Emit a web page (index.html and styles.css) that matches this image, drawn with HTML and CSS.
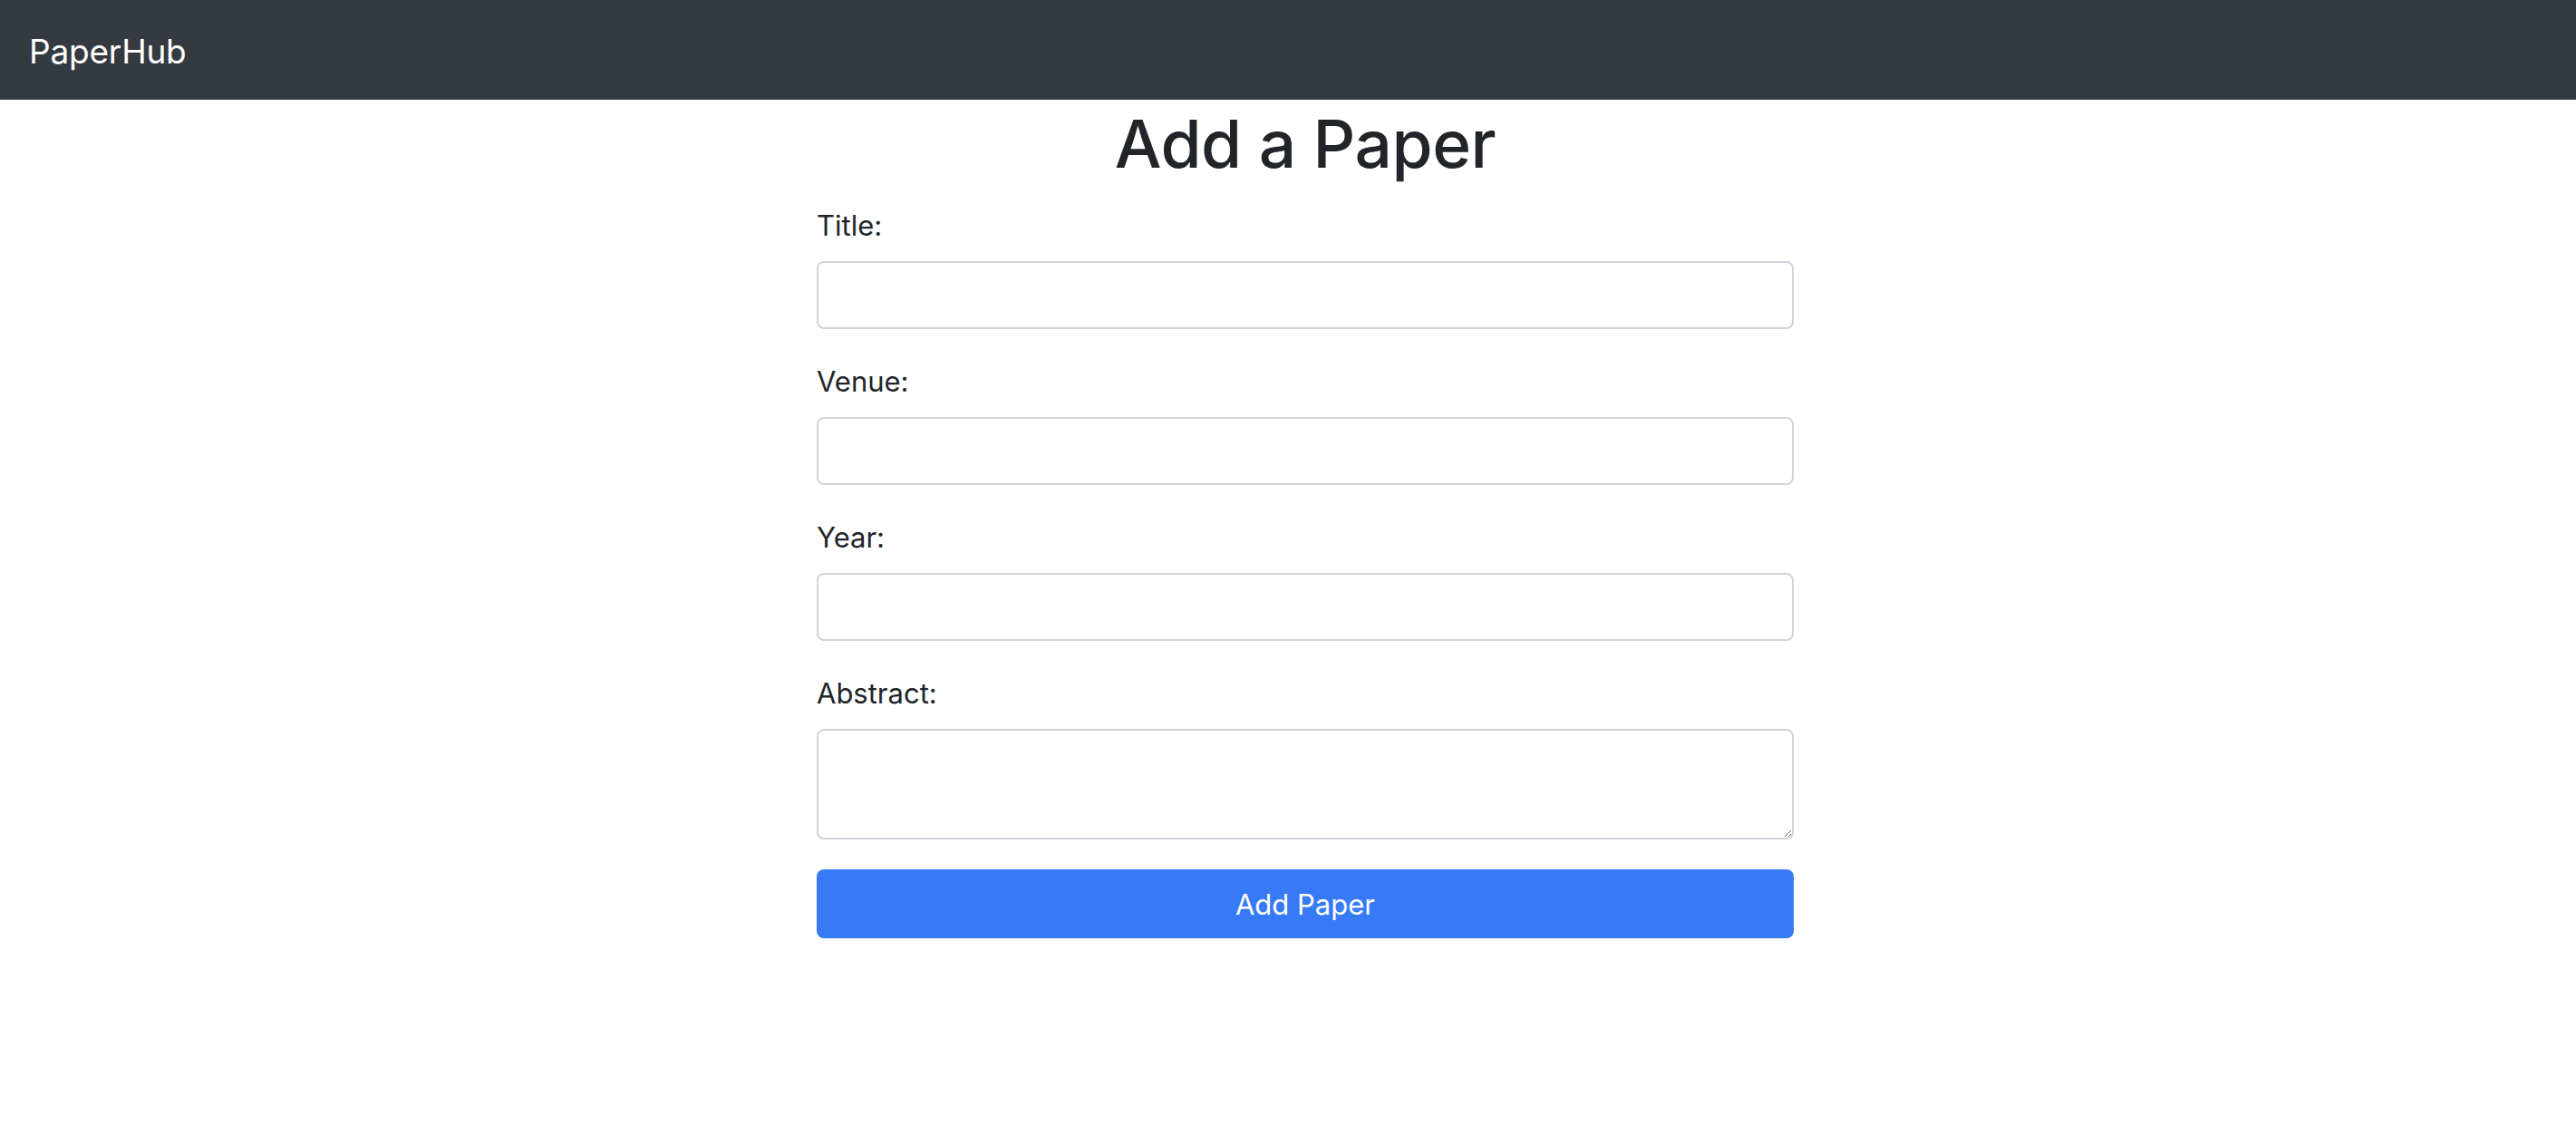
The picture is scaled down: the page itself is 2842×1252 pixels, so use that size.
FILE: index.html
```html
<!DOCTYPE html>
<html lang="en">
<head>
<meta charset="utf-8">
<title>PaperHub - Add a Paper</title>
<link rel="stylesheet" href="styles.css">
</head>
<body>
<nav class="navbar">
  <span class="brand">PaperHub</span>
</nav>
<main class="main">
  <h1 class="page-title">Add a Paper</h1>
  <form class="paper-form">
    <div class="field">
      <label class="field-label" for="title">Title:</label>
      <input class="field-input" id="title" type="text">
    </div>
    <div class="field">
      <label class="field-label" for="venue">Venue:</label>
      <input class="field-input" id="venue" type="text">
    </div>
    <div class="field">
      <label class="field-label" for="year">Year:</label>
      <input class="field-input" id="year" type="text">
    </div>
    <div class="field field-last">
      <label class="field-label" for="abstract">Abstract:</label>
      <textarea class="field-input field-textarea" id="abstract"></textarea>
    </div>
    <button class="submit-btn" type="button">Add Paper</button>
  </form>
</main>
</body>
</html>
```
FILE: styles.css
```css
* { box-sizing: border-box; }
html, body {
  margin: 0;
  padding: 0;
  background: #ffffff;
  font-family: Inter, "Noto Sans", "Liberation Sans", sans-serif;
  color: #212529;
}
.navbar {
  height: 110px;
  background: #343a40;
  display: flex;
  align-items: center;
  padding-left: 32px;
}
.brand {
  color: #ffffff;
  font-size: 37px;
  line-height: 1;
  margin-top: 2px;
  letter-spacing: -0.2px;
}
.main {
  width: 1078px;
  margin-left: 901px;
  padding-top: 5px;
}
.page-title {
  margin: 0 0 23px 0;
  text-align: center;
  font-size: 73px;
  font-weight: 500;
  line-height: 1.2;
  letter-spacing: -0.5px;
}
.paper-form {
  display: flex;
  flex-direction: column;
}
.field {
  display: flex;
  flex-direction: column;
  margin-bottom: 34.5px;
}
.field-last {
  margin-bottom: 33px;
}
.field-label {
  font-size: 31px;
  line-height: 1.5;
  margin-bottom: 16px;
}
.field-input {
  display: block;
  width: 100%;
  height: 75px;
  border: 2px solid #ced4da;
  border-radius: 8px;
  background: #ffffff;
  font-family: inherit;
  font-size: 31px;
  padding: 0 22px;
  margin: 0;
}
.field-textarea {
  height: 122px;
  resize: vertical;
}
.submit-btn {
  display: block;
  width: 100%;
  height: 76px;
  border: none;
  border-radius: 8px;
  background: #377af5;
  color: #ffffff;
  font-family: inherit;
  font-size: 31px;
  line-height: 1;
  padding: 0;
}
```
